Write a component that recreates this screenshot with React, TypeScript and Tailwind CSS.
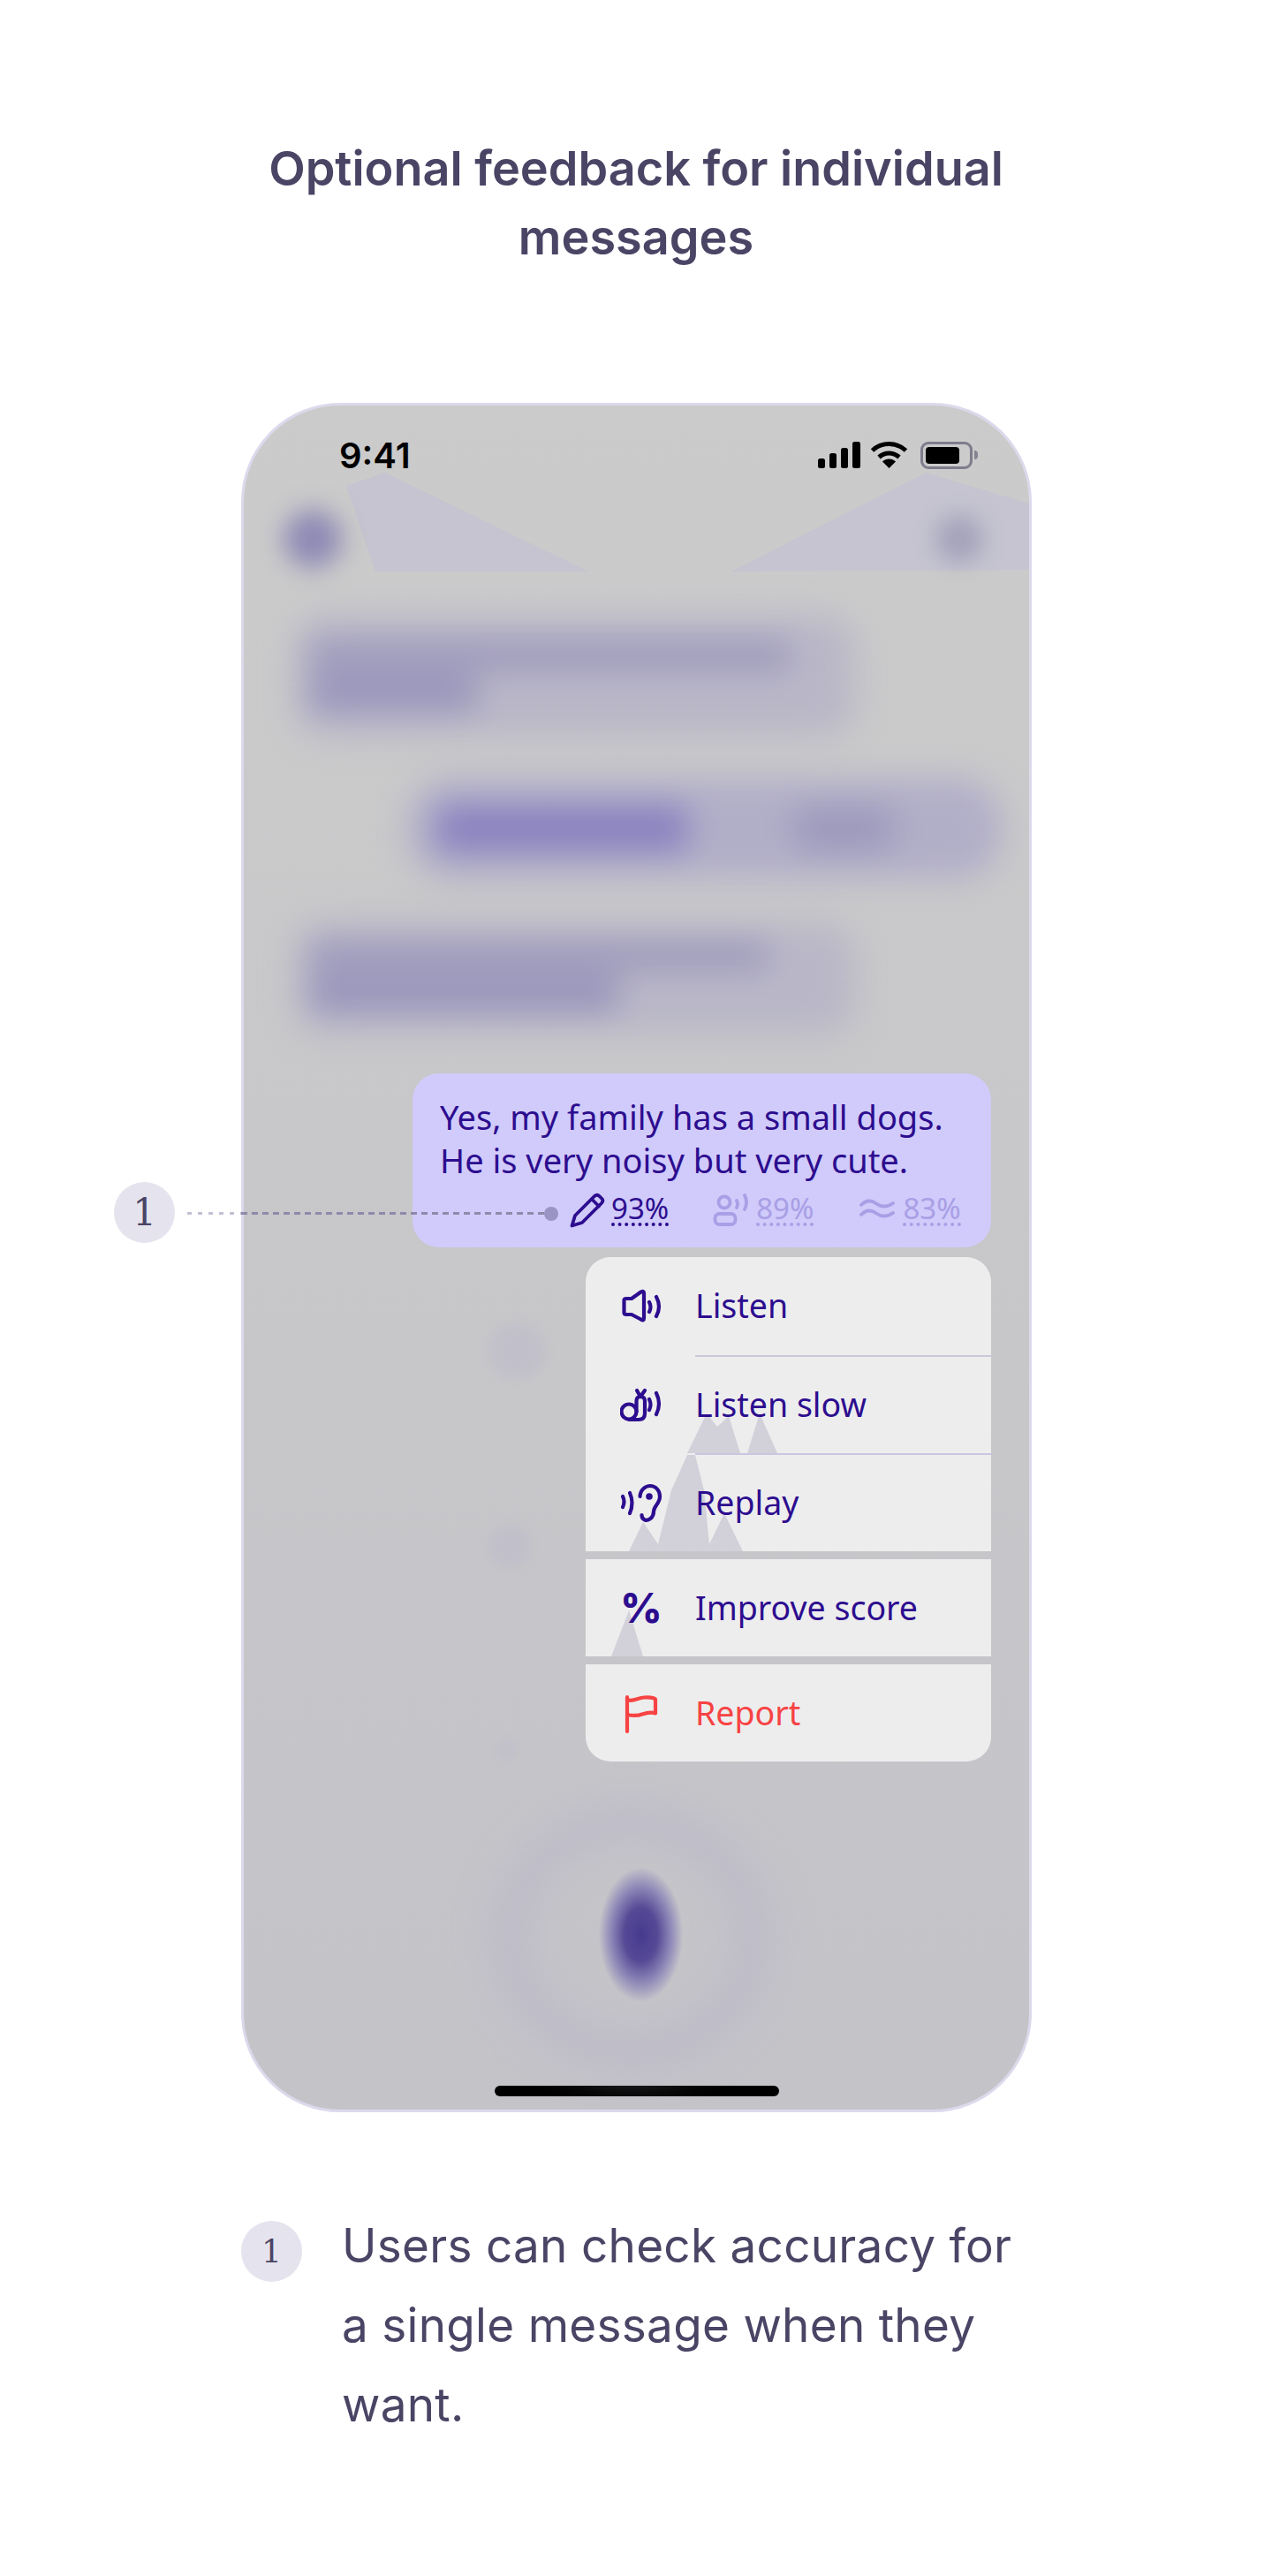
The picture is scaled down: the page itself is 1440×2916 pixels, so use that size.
function Speaker() {
  return (
    <svg width="48" height="48" viewBox="0 0 48 48" fill="none" stroke="currentColor" strokeWidth="4.2" strokeLinecap="round" strokeLinejoin="round">
      <path d="M4.500 17Q4.500 15 7 15H13L23.500 7.500Q27 5.500 27 9V37Q27 41 23.500 38.500L13 33H7Q4.500 33 4.500 31Z" />
      <path d="M33 19Q36 24.500 33 30M41 13Q47 24 41 35" />
    </svg>
  );
}

function Snail() {
  return (
    <svg width="48" height="48" viewBox="0 0 48 48" fill="none" stroke="currentColor" strokeWidth="4.2" strokeLinecap="round" strokeLinejoin="round">
      <circle cx="10" cy="31" r="8.500" />
      <path d="M18.500 31V19Q18.500 14 23 14Q28 14 28 19V33Q28 40 21 40H10M23 14L19 7M23 14L28 7" />
      <path d="M33 17Q36 23 33 29M41 10Q47 22 41 34" />
    </svg>
  );
}

function Ear() {
  return (
    <svg width="48" height="48" viewBox="0 0 48 48" fill="none" stroke="currentColor" strokeWidth="4.2" strokeLinecap="round" strokeLinejoin="round">
      <path d="M3 16Q6 22 3 28M11 12Q16 23 11 35" />
      <path d="M22.500 16C23 8 29 4 34 4C41 4 45 10 45 16C45 24 38 27 38 33C38 40 32 44 28 42.500C25.500 41.500 24.500 39.500 24.500 37" />
      <circle cx="33" cy="16" r="3.800" fill="currentColor" stroke="none" />
    </svg>
  );
}

function Flag() {
  return (
    <svg width="48" height="48" viewBox="0 0 48 48" fill="none" stroke="currentColor" strokeWidth="4.2" strokeLinecap="round" strokeLinejoin="round">
      <path d="M8 45V6" />
      <path d="M8 9C14 12 20 7 27 6.500C33 6 38 6.500 40 8.500V24.500C36 23 31 23.500 25 25.500C20 27.500 13 27 8 26" />
    </svg>
  );
}

function Pencil() {
  return (
    <svg width="40" height="40" viewBox="0 0 40 40" fill="none" stroke="currentColor" strokeWidth="3.800" strokeLinecap="round" strokeLinejoin="round">
      <path d="M2.500 37.500L6 26L28 4Q31 1.500 33.500 4L36.500 7Q38.500 9.500 36 12L14 34Z" />
      <path d="M25 7.500L33 15.500" />
    </svg>
  );
}

function Voice() {
  return (
    <svg width="40" height="40" viewBox="0 0 40 40" fill="none" stroke="currentColor" strokeWidth="3.800" strokeLinecap="round" strokeLinejoin="round">
      <circle cx="13" cy="11" r="6.500" />
      <rect x="2.500" y="24" width="23" height="12" rx="5" />
      <path d="M27 9Q29 13 27 17M36 3Q40 11 36 19" />
    </svg>
  );
}

function Waves() {
  return (
    <svg width="40" height="40" viewBox="0 0 40 40" fill="none" stroke="currentColor" strokeWidth="3.800" strokeLinecap="round" strokeLinejoin="round">
      <path d="M2 14Q10 6 19 12.500T38 12" />
      <path d="M2 25Q10 17 19 23.500T38 23" />
    </svg>
  );
}

function Score({ icon, value, faded, className }: { icon: React.ReactNode; value: string; faded?: boolean; className?: string }) {
  return (
    <div className={`flex items-start ${faded ? "gap-[9px] text-[#a99fe6]" : "gap-[7px] text-[#2d0d8f]"} ${className ?? ""}`}>
      {icon}
      <span className="mt-[1px] border-b-4 border-dotted border-current font-['Noto_Sans',sans-serif] text-[33px] leading-[33px]">
        {value}
      </span>
    </div>
  );
}

function Row({ icon, label, red, height }: { icon: React.ReactNode; label: string; red?: boolean; height: string }) {
  return (
    <div className={`relative z-10 flex items-center pl-[39px] font-['Noto_Sans',sans-serif] text-[37.5px] ${height} ${red ? "text-[#f74343]" : "text-[#2d0d8f]"}`}>
      <span className="flex w-[85px] shrink-0 items-center">{icon}</span>
      <span>{label}</span>
    </div>
  );
}

function Badge({ size }: { size: string }) {
  return (
    <div className={`flex h-[69px] w-[69px] shrink-0 items-center justify-center rounded-full bg-[#e5e3ed] font-['DejaVu_Serif',serif] text-[#4a4465] ${size}`}>
      1
    </div>
  );
}

export default function App() {
  return (
    <div className="flex min-h-[2916px] w-full flex-col items-center bg-white font-['Inter',sans-serif] text-[#4a4465]">
      <h1 className="mt-[152px] w-[880px] text-center text-[54px] leading-[78px] font-semibold">
        Optional feedback for individual messages
      </h1>

      <div className="relative mt-[148px] ml-[1px] w-[895px]">
        <div className="relative flex h-[1935px] flex-col overflow-hidden rounded-[112px] border-[3px] border-[#dcd9ec] bg-gradient-to-b from-[#cbcbcb] to-[#c4c3c8]">
          <svg className="absolute top-0 left-0" width="889" height="200" fill="#c5c4d0">
            <polygon points="116,91 160,76 390,188 149,188" />
            <polygon points="552,188 772,76 889,111 889,186" />
          </svg>
          <div className="absolute top-[1038px] left-[277px] h-[64px] w-[64px] rounded-full bg-[#c1c0ca] blur-[6px]" />
          <div className="absolute top-[1267px] left-[276px] h-[50px] w-[50px] rounded-full bg-[#c1c0ca] blur-[5px]" />
          <div className="absolute top-[1510px] left-[285px] h-[24px] w-[24px] rounded-full bg-[#c1c0ca] blur-[4px]" />

          <div className="relative z-10 mt-[40px] flex h-[32px] items-center justify-between pr-[58px] pl-[108px] text-black">
            <span className="mt-[2px] text-[40px] leading-[32px] font-semibold">9:41</span>
            <div className="flex items-center gap-[11px]">
              <svg width="48" height="32" viewBox="0 0 48 32" fill="currentColor">
                <rect x="0" y="20" width="8" height="11" rx="2.500" />
                <rect x="13" y="14" width="8" height="17" rx="2.500" />
                <rect x="26" y="8" width="8" height="23" rx="2.500" />
                <rect x="39" y="1" width="9" height="30" rx="2.500" />
              </svg>
              <svg width="43" height="32" viewBox="0 0 43 32" fill="none" stroke="currentColor" strokeWidth="5">
                <path d="M2.500 11C13 1 30 1 40.500 11" />
                <path d="M10 18.500C17 12.500 26 12.500 33 18.500" />
                <path d="M21.500 31L14 23.500C18 19.500 25 19.500 29 23.500Z" fill="currentColor" stroke="none" />
              </svg>
              <div className="ml-[3px] flex items-center">
                <div className="flex h-[31px] w-[59px] items-center rounded-[9px] border-[3px] border-[#7f7c8c] p-[3px]">
                  <div className="h-full w-[38px] rounded-[4px] bg-black" />
                </div>
                <div className="ml-[2px] h-[10px] w-[4px] rounded-r-full bg-[#85838f]" />
              </div>
            </div>
          </div>

          <div className="mt-[44px] flex h-[70px] items-center justify-between pr-[52px] pl-[45px]">
            <div className="h-[66px] w-[66px] rounded-full bg-[#8f8ab5] blur-[14px]" />
            <div className="h-[54px] w-[54px] rounded-full bg-[#a5a3ba] blur-[12px]" />
          </div>

          <div className="mt-[52px] ml-[58px] h-[136px] w-[634px] rounded-[36px] bg-[#b9b7c7] pt-[28px] pl-[16px] blur-[18px]">
            <div className="h-[34px] w-[545px] rounded-lg bg-[#9d99bc]" />
            <div className="mt-[6px] h-[40px] w-[190px] rounded-lg bg-[#9894bb]" />
          </div>

          <div className="mt-[49px] mr-[32px] flex h-[112px] w-[670px] items-center self-end rounded-[50px] bg-[#b1aec8] pl-[32px] blur-[18px]">
            <div className="h-[52px] w-[283px] rounded-lg bg-[#8a82c0]" />
            <div className="ml-[122px] h-[50px] w-[110px] rounded-lg bg-[#9d99bc]" />
          </div>

          <div className="mt-[51px] ml-[58px] h-[125px] w-[634px] rounded-[36px] bg-[#b9b7c7] pt-[20px] pl-[16px] blur-[18px]">
            <div className="h-[33px] w-[520px] rounded-lg bg-[#9d99bc]" />
            <div className="mt-[6px] h-[41px] w-[350px] rounded-lg bg-[#9894bb]" />
          </div>

          <div className="relative mt-[45px] mr-[43px] h-[197px] w-[655px] self-end rounded-[30px] bg-[#d0cbfa] pt-[25px] pl-[31px] font-['Noto_Sans',sans-serif] text-[38px] leading-[49px] text-[#2d0d8f]">
            <p>Yes, my family has a small dogs.</p>
            <p>He is very noisy but very cute.</p>
            <div className="absolute top-[135px] left-[178px] flex">
              <Score icon={<Pencil />} value="93%" />
              <Score icon={<Voice />} value="89%" faded className="ml-[50px]" />
              <Score icon={<Waves />} value="83%" faded className="ml-[52px]" />
            </div>
          </div>

          <div className="relative mt-[11px] mr-[43px] flex w-[459px] flex-col gap-[9px] self-end overflow-hidden rounded-[28px]">
            <div className="relative bg-[#ededee]">
              <svg className="absolute top-0 left-0" width="459" height="333" fill="#d2d0d9">
                <polygon points="115,222 137,177 149,192 162,180 175,222" />
                <polygon points="183,222 197,177 217,222" />
                <polygon points="115,224 124,224 134,264 140,325 157,290 178,333 49,333 65,300 82,325 97,264" />
              </svg>
              <Row icon={<Speaker />} label="Listen" height="h-[111px]" />
              <div className="relative z-10 ml-[124px] h-[2px] bg-[#cbc8da]" />
              <Row icon={<Snail />} label="Listen slow" height="h-[109px]" />
              <div className="relative z-10 ml-[124px] h-[2px] bg-[#c9c6e0]" />
              <Row icon={<Ear />} label="Replay" height="h-[109px]" />
            </div>
            <div className="relative bg-[#ededee]">
              <svg className="absolute top-0 left-0" width="459" height="110" fill="#d2d0d9">
                <polygon points="29,110 49,58 65,110" />
              </svg>
              <Row
                icon={<span className="w-[48px] text-center font-['Inter',sans-serif] text-[46px] leading-none font-extrabold">%</span>}
                label="Improve score"
                height="h-[110px]"
              />
            </div>
            <div className="bg-[#ededee]">
              <Row icon={<Flag />} label="Report" red height="h-[110px]" />
            </div>
          </div>

          <div className="relative mt-[49px] ml-[280px] h-[300px] w-[318px]">
            <div className="absolute inset-0 rounded-[50%] border-[40px] border-[#b9b7c8] opacity-70 blur-[22px]" />
            <div className="absolute top-[71px] left-[122px] h-[152px] w-[95px] rounded-[50%] bg-[radial-gradient(closest-side,#463a8e_0%,#564a96_40%,#8f89b8_72%,#c4c3c9_100%)]" />
          </div>

          <div className="mt-[18px] h-[12px] w-[322px] self-center rounded-full bg-black" />
        </div>

        <div className="absolute top-[882px] left-[-144px] z-20 flex items-center">
          <Badge size="text-[42px]" />
          <div className="mt-[2px] ml-[14px] h-[3px] w-[61px] bg-[repeating-linear-gradient(90deg,#c3c0d2_0_5px,transparent_5px_12px)]" />
          <div className="mt-[2px] h-[3px] w-[343px] bg-[repeating-linear-gradient(90deg,#8f89ab_0_7px,transparent_7px_12px)]" />
          <div className="mt-[2px] h-[16px] w-[16px] rounded-full bg-[#9a94c4]" />
        </div>
      </div>

      <div className="mt-[106px] ml-[1px] flex w-[895px] items-start gap-[45px]">
        <div className="mt-[17px]">
          <Badge size="text-[36px]" />
        </div>
        <p className="w-[790px] text-[53px] leading-[90px] tracking-[0.3px]">
          Users can check accuracy for
          <br />a single message when they
          <br />want.
        </p>
      </div>
    </div>
  );
}
